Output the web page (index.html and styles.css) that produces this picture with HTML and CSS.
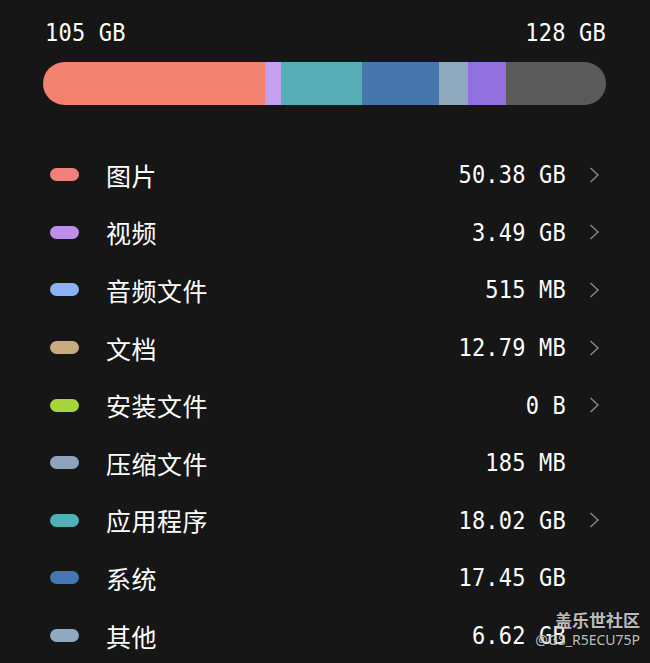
FILE: index.html
```
<html>
	<head>
		<title>Storage</title>
		<link rel="stylesheet" href="styles.css">
	</head>
	<body>
		<div id="storage">
			<div class="total">
				<span>105 GB</span>
				<span>128 GB</span>
			</div>
			<div class="bar">
				<div class="seg" style="width: 222px; background-color: #f2816f;"></div>
				<div class="seg" style="width: 16px; background-color: #c59ff1;"></div>
				<div class="seg" style="width: 81px; background-color: #57aeb6;"></div>
				<div class="seg" style="width: 77px; background-color: #4676ab;"></div>
				<div class="seg" style="width: 29px; background-color: #8faabf;"></div>
				<div class="seg" style="width: 38px; background-color: #9370e0;"></div>
				<div class="seg rest"></div>
			</div>
			<div class="list">
				<div class="row">
					<div class="dot" style="background-color: #f2807a;"></div>
					<div class="name">图片</div>
					<div class="size">50.38 GB</div>
					<div class="more"><svg width="12" height="18" viewBox="0 0 12 18"><path d="M2.5 2 L10 9 L2.5 16" fill="none" stroke="#8a8a8a" stroke-width="1.4"/></svg></div>
				</div>
				<div class="row">
					<div class="dot" style="background-color: #c08ee9;"></div>
					<div class="name">视频</div>
					<div class="size">3.49 GB</div>
					<div class="more"><svg width="12" height="18" viewBox="0 0 12 18"><path d="M2.5 2 L10 9 L2.5 16" fill="none" stroke="#8a8a8a" stroke-width="1.4"/></svg></div>
				</div>
				<div class="row">
					<div class="dot" style="background-color: #8ab3f5;"></div>
					<div class="name">音频文件</div>
					<div class="size">515 MB</div>
					<div class="more"><svg width="12" height="18" viewBox="0 0 12 18"><path d="M2.5 2 L10 9 L2.5 16" fill="none" stroke="#8a8a8a" stroke-width="1.4"/></svg></div>
				</div>
				<div class="row">
					<div class="dot" style="background-color: #c8ab7f;"></div>
					<div class="name">文档</div>
					<div class="size">12.79 MB</div>
					<div class="more"><svg width="12" height="18" viewBox="0 0 12 18"><path d="M2.5 2 L10 9 L2.5 16" fill="none" stroke="#8a8a8a" stroke-width="1.4"/></svg></div>
				</div>
				<div class="row">
					<div class="dot" style="background-color: #a6d53b;"></div>
					<div class="name">安装文件</div>
					<div class="size">0 B</div>
					<div class="more"><svg width="12" height="18" viewBox="0 0 12 18"><path d="M2.5 2 L10 9 L2.5 16" fill="none" stroke="#8a8a8a" stroke-width="1.4"/></svg></div>
				</div>
				<div class="row">
					<div class="dot" style="background-color: #8fa3be;"></div>
					<div class="name">压缩文件</div>
					<div class="size">185 MB</div>
					<div class="more"></div>
				</div>
				<div class="row">
					<div class="dot" style="background-color: #50b0b8;"></div>
					<div class="name">应用程序</div>
					<div class="size">18.02 GB</div>
					<div class="more"><svg width="12" height="18" viewBox="0 0 12 18"><path d="M2.5 2 L10 9 L2.5 16" fill="none" stroke="#8a8a8a" stroke-width="1.4"/></svg></div>
				</div>
				<div class="row">
					<div class="dot" style="background-color: #4677b2;"></div>
					<div class="name">系统</div>
					<div class="size">17.45 GB</div>
					<div class="more"></div>
				</div>
				<div class="row">
					<div class="dot" style="background-color: #8fa9c1;"></div>
					<div class="name">其他</div>
					<div class="size">6.62 GB</div>
					<div class="more"></div>
				</div>
			</div>
		</div>
		<div class="mark">
			<div class="mark-title">盖乐世社区</div>
			<div class="mark-user">@GS_R5ECU75P</div>
		</div>
	</body>
</html>
```
FILE: styles.css
```
body{
	margin: 0;
	background-color: #161616;
	color: #ffffff;
	width: 650px;
	height: 663px;
	overflow: hidden;
	position: relative;
}
#storage{
	padding: 18px 44px 0 43px;
}
.total{
	display: flex;
	justify-content: space-between;
	padding: 0 0 0 2px;
	font-family: "DejaVu Sans Mono", monospace;
	font-size: 22px;
	line-height: 30px;
	letter-spacing: 0.2px;
}
.total span{
	display: inline-block;
	transform: scaleY(1.15);
}
.bar{
	display: flex;
	height: 43px;
	margin-top: 14px;
	border-radius: 22px;
	overflow: hidden;
}
.seg{
	height: 100%;
}
.seg.rest{
	flex: 1;
	background-color: #5a5a5a;
}
.list{
	margin-top: 41px;
	padding: 0 6px 0 7px;
}
.row{
	display: flex;
	align-items: center;
	height: 57.6px;
}
.dot{
	width: 29px;
	height: 13px;
	border-radius: 7px;
	margin-right: 27px;
}
.name{
	flex: 1;
	font-family: "Noto Sans CJK SC", sans-serif;
	font-size: 25px;
	letter-spacing: 0.5px;
}
.size{
	font-family: "DejaVu Sans Mono", monospace;
	font-size: 22px;
	letter-spacing: 0.2px;
	transform: scaleY(1.15);
}
.more{
	width: 12px;
	height: 18px;
	margin-left: 22px;
}
.mark{
	position: absolute;
	right: 10px;
	bottom: 14px;
	text-align: right;
	color: rgba(235, 235, 235, 0.8);
	text-shadow: 0px 0px 2px rgba(0, 0, 0, 0.6);
	font-family: "Noto Sans CJK SC", sans-serif;
}
.mark-title{
	font-size: 17px;
	line-height: 22px;
	font-weight: bold;
}
.mark-user{
	font-family: "Noto Sans", sans-serif;
	font-size: 14px;
	line-height: 18px;
}
```
